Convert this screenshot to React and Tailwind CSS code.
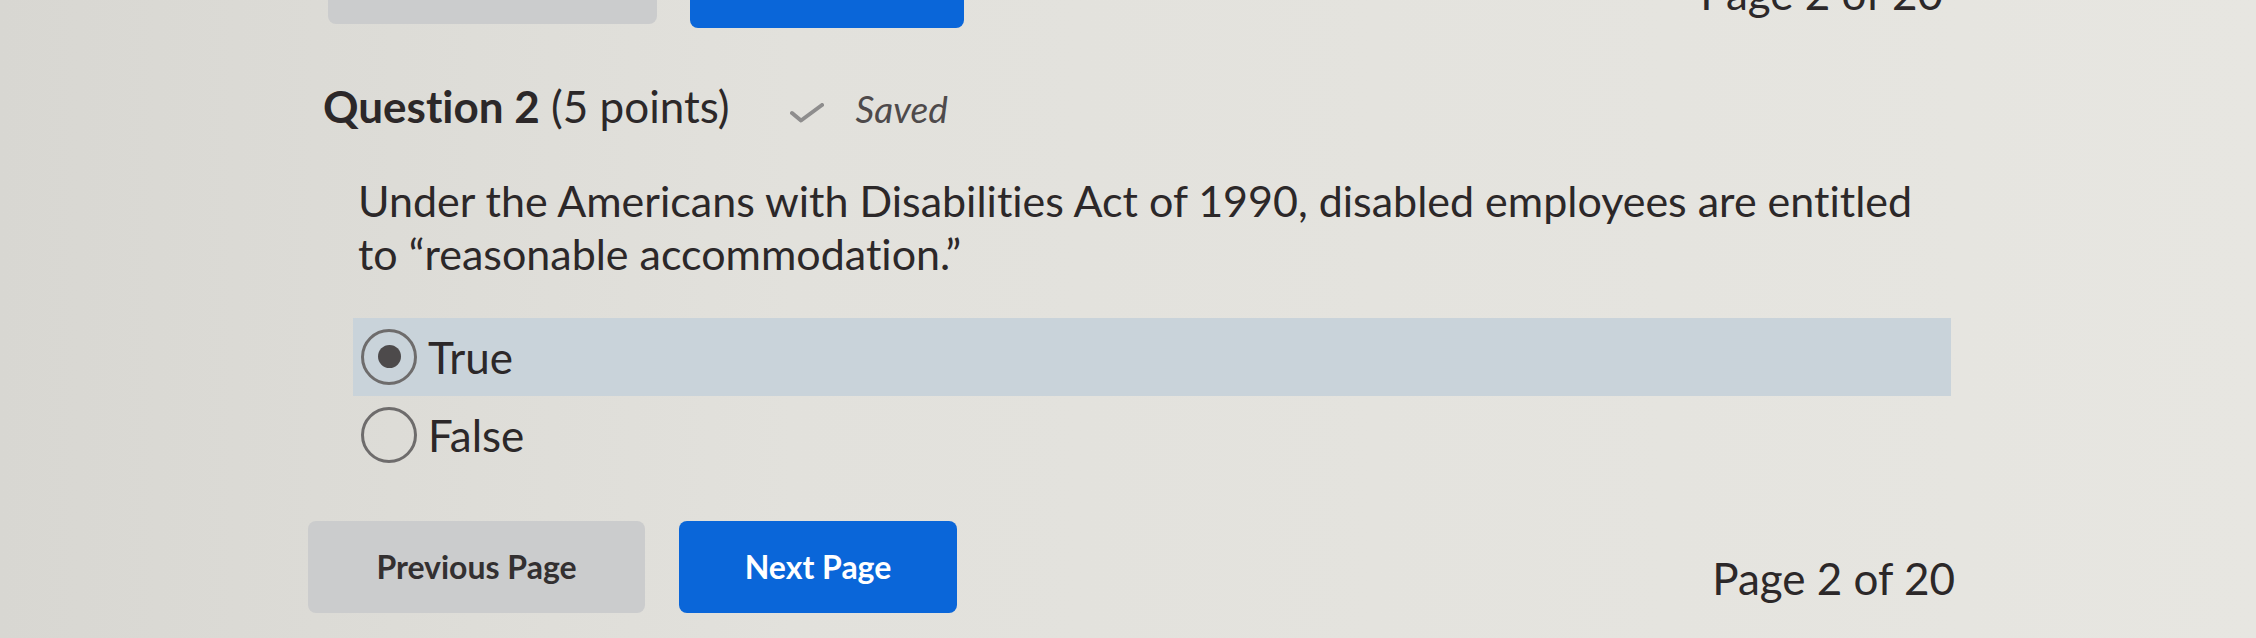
import React, { useState } from 'react';

function Radio({ checked }) {
  return (
    <span className="w-[56px] h-[56px] shrink-0 rounded-full border-[3px] border-[#6e6c6c] flex items-center justify-center">
      {checked && <span className="w-[23px] h-[23px] rounded-full bg-[#4d4a4b]"></span>}
    </span>
  );
}

export default function App() {
  const [answer, setAnswer] = useState('true');
  const options = [
    { id: 'true', label: 'True' },
    { id: 'false', label: 'False' },
  ];

  return (
    <div className="h-[638px] overflow-hidden font-[Lato,sans-serif] [font-variant-ligatures:none] text-[#2c2829] bg-[linear-gradient(90deg,#d8d7d2_0%,#e2e1dc_35%,#e7e6e1_100%)]">
      {/* previous question's nav, mostly scrolled off */}
      <div className="mt-[-66px] ml-[328px] w-[1615px] flex items-end justify-between">
        <div className="flex gap-[33px]">
          <div className="w-[329px] h-[90px] rounded-lg bg-[#cbcccd]"></div>
          <div className="w-[274px] h-[94px] rounded-lg bg-[#0a66d9]"></div>
        </div>
        <div className="text-[44px] leading-[1.2] mb-[8px]">Page 2 of 20</div>
      </div>

      <div className="ml-[308px] w-[1647px]">
        <div className="mt-[52px] ml-[15px] flex items-baseline">
          <h2 className="text-[44px] leading-[1.2]">
            <span className="font-bold">Question 2</span> (5 points)
          </h2>
          <svg className="ml-[60px] mb-[2px]" width="34" height="20" viewBox="0 0 34 20" fill="none">
            <polyline points="2,10 11,17.5 32,2" stroke="#8e8d8d" strokeWidth="4" strokeLinecap="round" strokeLinejoin="round" />
          </svg>
          <span className="ml-[32px] text-[37px] italic text-[#4e4a4b]">Saved</span>
        </div>

        <p className="mt-[37px] ml-[50px] w-[1570px] text-[43px] leading-[53px]">
          Under the Americans with Disabilities Act of 1990, disabled employees are entitled to “reasonable accommodation.”
        </p>

        <div className="mt-[38px] ml-[45px] w-[1598px]">
          {options.map(opt => (
            <label
              key={opt.id}
              onClick={() => setAnswer(opt.id)}
              className={`h-[78px] pl-[8px] flex items-center gap-[11px] cursor-pointer ${answer === opt.id ? 'bg-[#c9d3da]' : ''}`}
            >
              <Radio checked={answer === opt.id} />
              <span className="text-[44px] leading-none">{opt.label}</span>
            </label>
          ))}
        </div>

        <div className="mt-[47px] flex items-end justify-between">
          <div className="flex gap-[34px]">
            <button className="w-[337px] h-[92px] rounded-lg bg-[#cbcccd] text-[32px] font-bold text-[#333031]">
              Previous Page
            </button>
            <button className="w-[278px] h-[92px] rounded-lg bg-[#0a66d9] text-[32px] font-bold text-white">
              Next Page
            </button>
          </div>
          <div className="text-[44px] leading-[1.2] mb-[8px]">Page 2 of 20</div>
        </div>
      </div>
    </div>
  );
}
